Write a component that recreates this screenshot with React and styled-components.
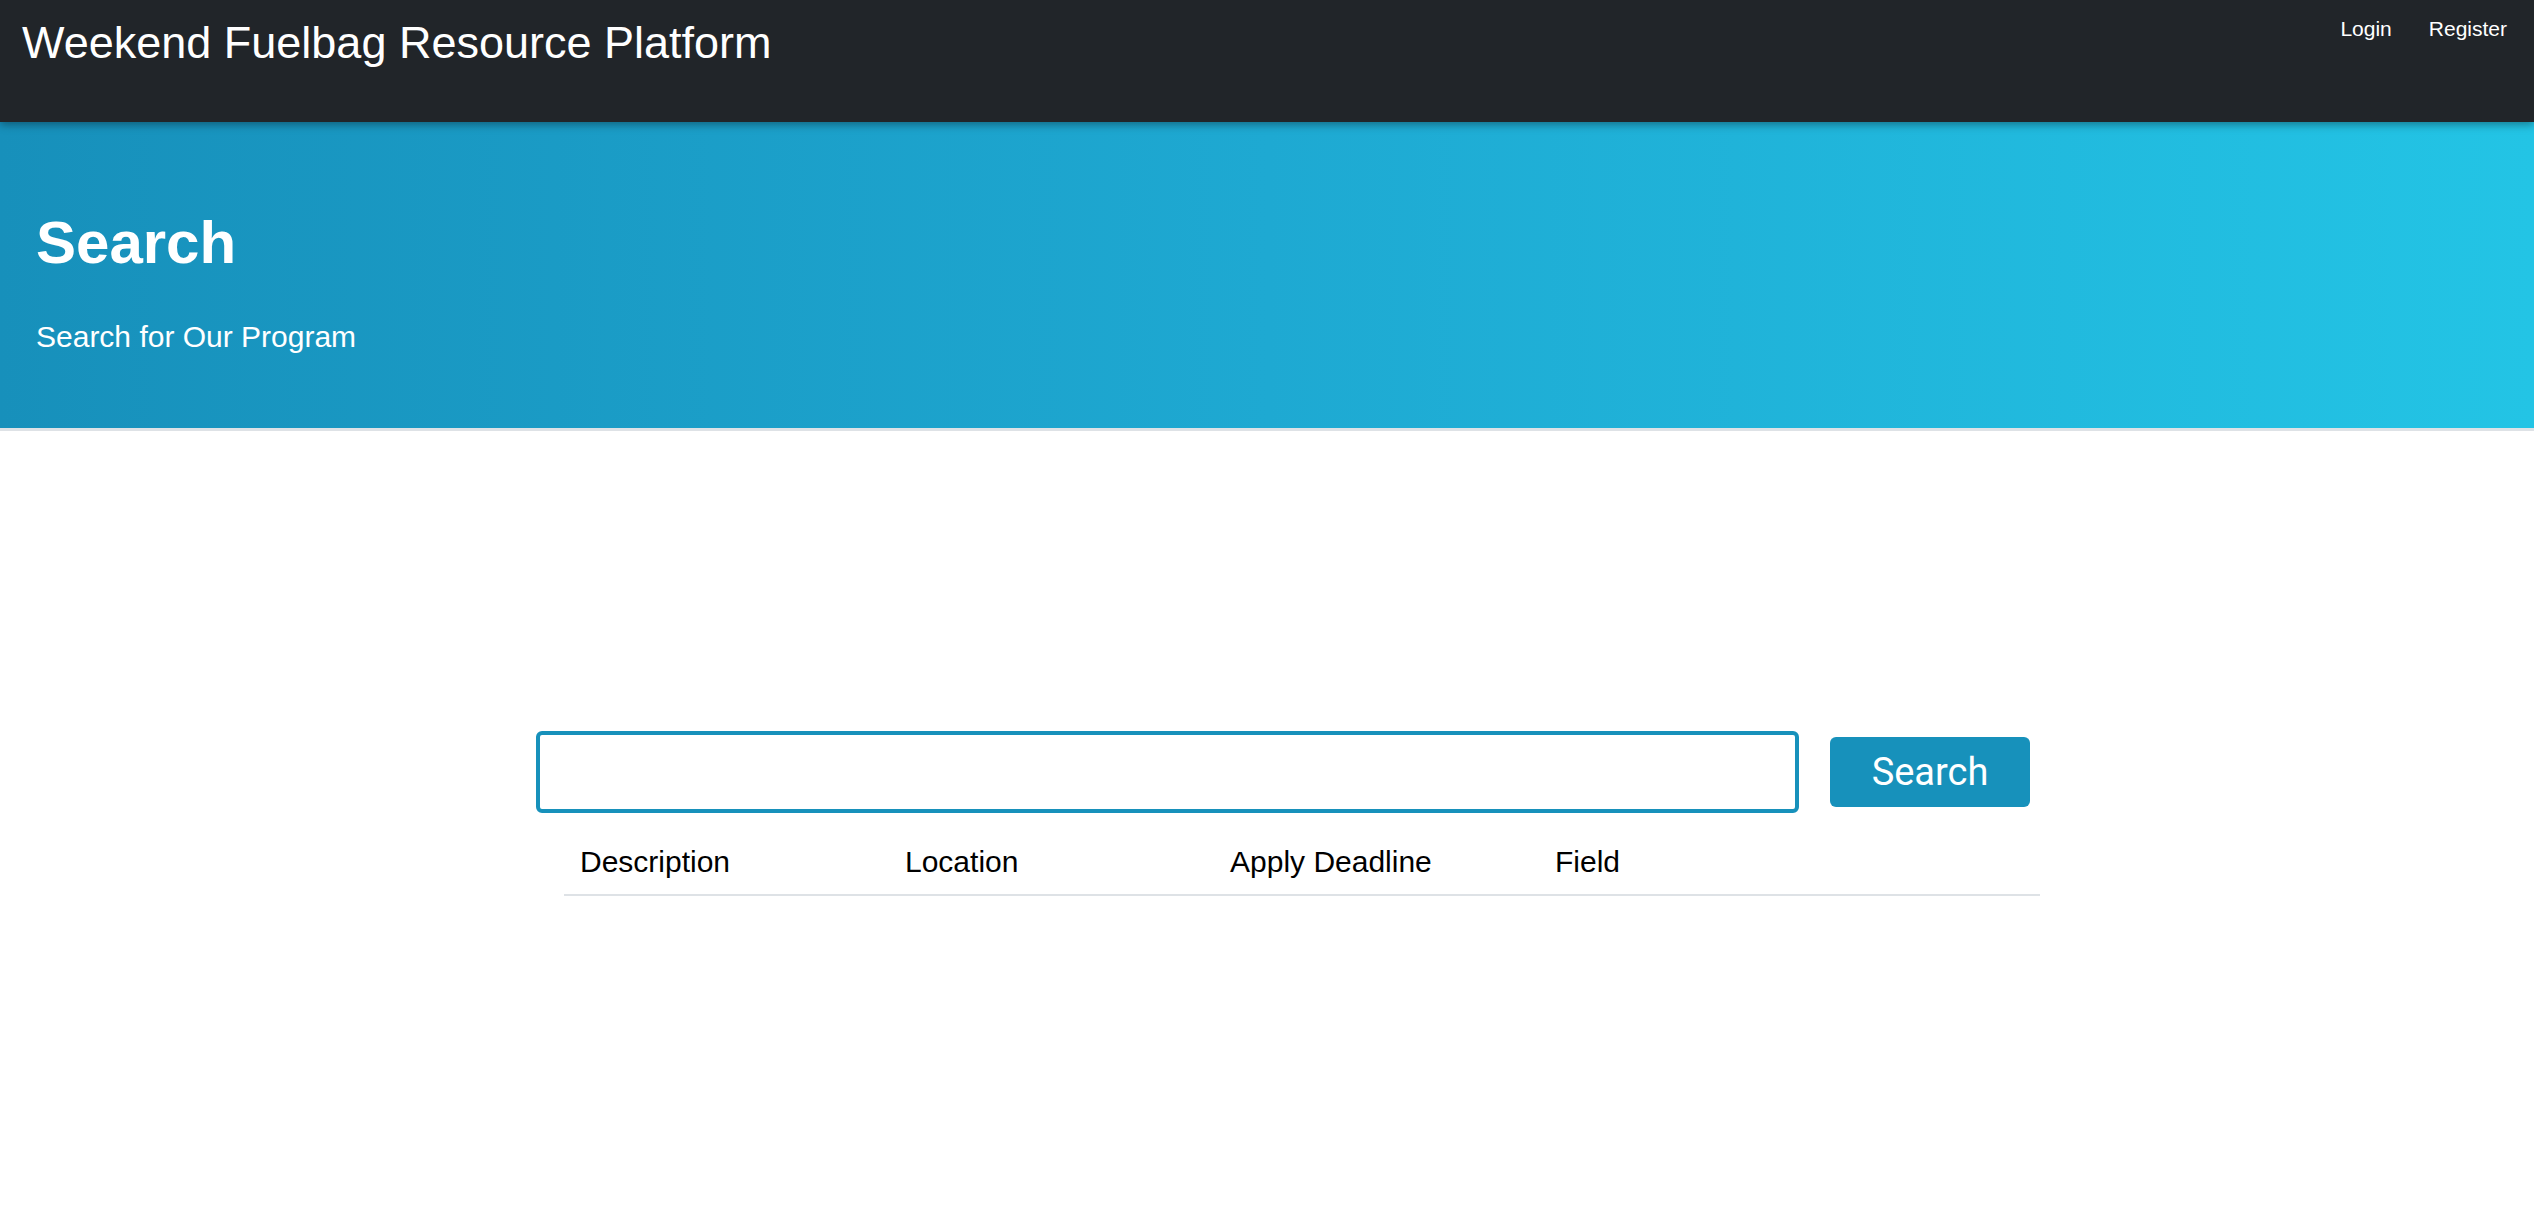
import React, { useState } from 'react';
import styled, { createGlobalStyle } from 'styled-components';

const GlobalStyle = createGlobalStyle`
  * {
    box-sizing: border-box;
  }
  body {
    margin: 0;
    background: #ffffff;
    font-family: "Liberation Sans", Arial, sans-serif;
    color: #000;
  }
`;

const Navbar = styled.nav`
  position: relative;
  z-index: 2;
  display: flex;
  justify-content: space-between;
  align-items: flex-start;
  height: 122px;
  padding: 17px 27px 0 22px;
  background-color: #212529;
  box-shadow: 0 3px 8px rgba(0, 0, 0, 0.35);
`;

const Brand = styled.a`
  color: #ffffff;
  font-size: 45px;
  text-decoration: none;
  white-space: nowrap;
`;

const NavLinks = styled.div`
  display: flex;
  gap: 37px;
`;

const NavLink = styled.a`
  color: #ffffff;
  font-size: 21px;
  text-decoration: none;
  cursor: pointer;
`;

const Hero = styled.header`
  height: 309px;
  padding: 85px 36px 0;
  background: linear-gradient(to right, #1790bb 0%, #1ea9d2 50%, #23c4e5 100%);
  border-bottom: 3px solid #dee2e6;
  color: #ffffff;
`;

const HeroTitle = styled.h1`
  margin: 0;
  font-size: 60px;
  font-weight: 700;
  line-height: 72px;
`;

const HeroText = styled.p`
  margin: 35px 0 0;
  font-size: 30px;
  line-height: 45px;
`;

const Main = styled.main`
  padding-top: 300px;
  padding-bottom: 200px;
`;

const SearchRow = styled.form`
  display: flex;
  align-items: center;
  gap: 31px;
  margin-left: 536px;
`;

const SearchInput = styled.input`
  width: 1263px;
  height: 82px;
  padding: 0 20px;
  border: 4px solid #1791bb;
  border-radius: 6px;
  font-size: 30px;
  font-family: "Liberation Sans", Arial, sans-serif;
  outline: none;
`;

const SearchButton = styled.button`
  width: 200px;
  height: 70px;
  border: none;
  border-radius: 6px;
  background-color: #1791bb;
  color: #ffffff;
  font-family: Roboto, "Liberation Sans", sans-serif;
  font-size: 38px;
  cursor: pointer;
`;

const Table = styled.table`
  width: 1476px;
  margin: 19px 0 0 564px;
  border-collapse: collapse;
  table-layout: fixed;
`;

const HeadCell = styled.th`
  width: ${(p) => p.$width || 'auto'};
  padding: 12px 16px 14px;
  text-align: left;
  font-size: 30px;
  font-weight: 400;
  line-height: 36px;
  color: #000;
  border-bottom: 2px solid #dee2e6;
`;

const columns = ['Description', 'Location', 'Apply Deadline', 'Field'];

export default function App() {
  const [query, setQuery] = useState('');

  return (
    <>
      <GlobalStyle />
      <Navbar>
        <Brand href="#">Weekend Fuelbag Resource Platform</Brand>
        <NavLinks>
          <NavLink>Login</NavLink>
          <NavLink>Register</NavLink>
        </NavLinks>
      </Navbar>
      <Hero>
        <HeroTitle>Search</HeroTitle>
        <HeroText>Search for Our Program</HeroText>
      </Hero>
      <Main>
        <SearchRow onSubmit={(e) => e.preventDefault()}>
          <SearchInput value={query} onChange={(e) => setQuery(e.target.value)} />
          <SearchButton type="submit">Search</SearchButton>
        </SearchRow>
        <Table>
          <thead>
            <tr>
              {columns.map((c) => (
                <HeadCell key={c} $width="325px">{c}</HeadCell>
              ))}
              <HeadCell />
            </tr>
          </thead>
        </Table>
      </Main>
    </>
  );
}
